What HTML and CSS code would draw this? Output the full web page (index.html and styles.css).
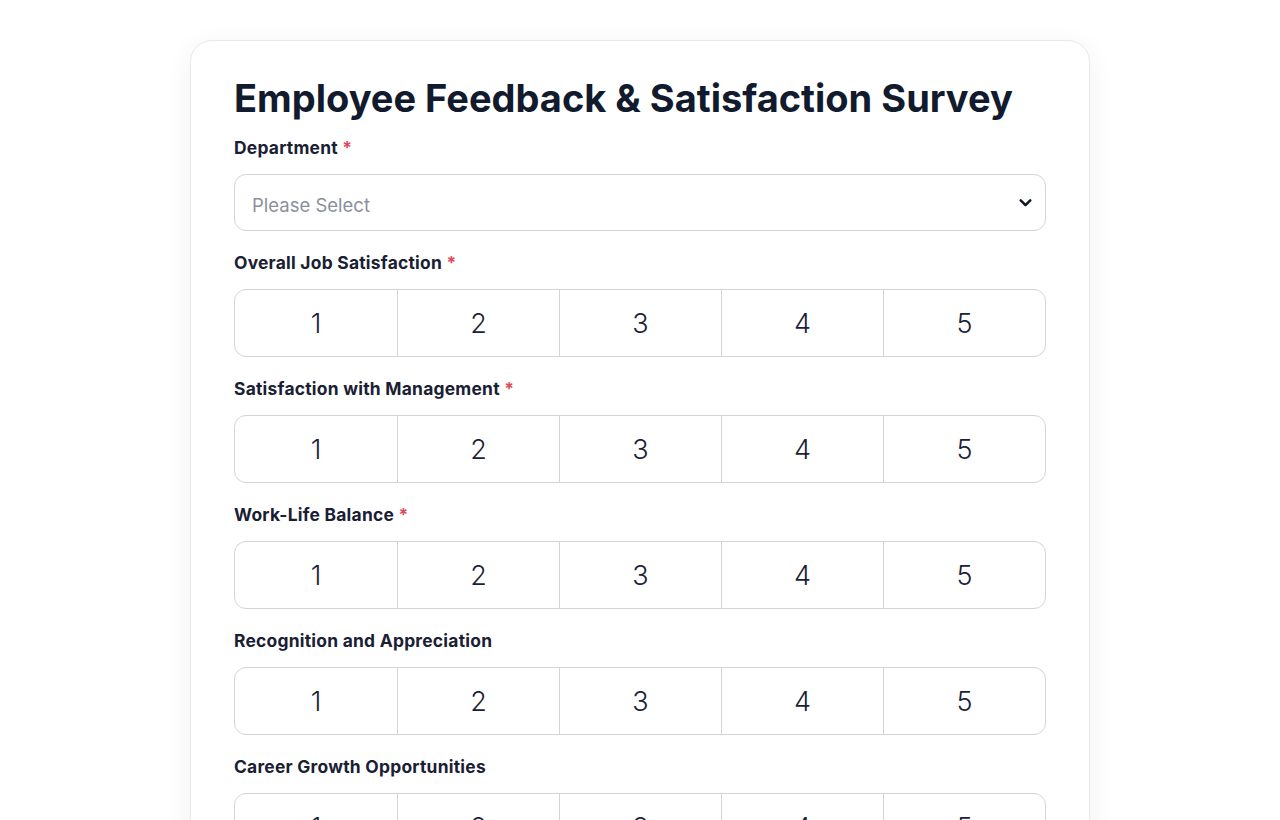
FILE: index.html
```html
<!DOCTYPE html>
<html lang="en">
<head>
<meta charset="utf-8">
<title>Employee Feedback &amp; Satisfaction Survey</title>
<link rel="stylesheet" href="styles.css">
</head>
<body>
<main class="page">
  <form class="card">
    <h1 class="title">Employee Feedback &amp; Satisfaction Survey</h1>

    <div class="field">
      <label class="label">Department <span class="req">*</span></label>
      <div class="select">
        <span class="placeholder">Please Select</span>
        <svg class="chevron" width="17" height="17" viewBox="0 0 16 16" aria-hidden="true"><path d="M3.5 6l4.5 4.5L12.5 6" fill="none" stroke="#111827" stroke-width="2.4" stroke-linecap="round" stroke-linejoin="round"/></svg>
      </div>
    </div>

    <div class="field">
      <label class="label">Overall Job Satisfaction <span class="req">*</span></label>
      <div class="rating"><span class="cell">1</span><span class="cell">2</span><span class="cell">3</span><span class="cell">4</span><span class="cell">5</span></div>
    </div>

    <div class="field">
      <label class="label">Satisfaction with Management <span class="req">*</span></label>
      <div class="rating"><span class="cell">1</span><span class="cell">2</span><span class="cell">3</span><span class="cell">4</span><span class="cell">5</span></div>
    </div>

    <div class="field">
      <label class="label">Work-Life Balance <span class="req">*</span></label>
      <div class="rating"><span class="cell">1</span><span class="cell">2</span><span class="cell">3</span><span class="cell">4</span><span class="cell">5</span></div>
    </div>

    <div class="field">
      <label class="label">Recognition and Appreciation</label>
      <div class="rating"><span class="cell">1</span><span class="cell">2</span><span class="cell">3</span><span class="cell">4</span><span class="cell">5</span></div>
    </div>

    <div class="field">
      <label class="label">Career Growth Opportunities</label>
      <div class="rating"><span class="cell">1</span><span class="cell">2</span><span class="cell">3</span><span class="cell">4</span><span class="cell">5</span></div>
    </div>
  </form>
</main>
</body>
</html>
```
FILE: styles.css
```css
* { box-sizing: border-box; }
html, body { margin: 0; padding: 0; background: #ffffff; }
body {
  font-family: Inter, "Noto Sans", "Liberation Sans", sans-serif;
  color: #141a2e;
  height: 820px;
  overflow: hidden;
}
.page {
  display: flex;
  justify-content: center;
  padding-top: 40px;
}
.card {
  width: 900px;
  background: #fff;
  border: 1px solid #e8e9ee;
  border-radius: 22px;
  box-shadow: 0 6px 28px rgba(20, 26, 46, 0.06);
  padding: 33px 43px 60px 43px;
  display: flex;
  flex-direction: column;
}
.title {
  margin: 0;
  font-size: 38px;
  line-height: 48px;
  font-weight: 700;
  letter-spacing: 0;
  color: #121a2e;
}
.field {
  display: flex;
  flex-direction: column;
  margin-top: 14px;
}
.field + .field { margin-top: 20px; }
.label {
  font-size: 17.4px;
  line-height: 24px;
  font-weight: 700;
  letter-spacing: 0.25px;
  color: #1a2033;
  margin-bottom: 14px;
}
.req { color: #e04758; }
.select {
  height: 57px;
  border: 1px solid #d2d4dc;
  border-radius: 12px;
  display: flex;
  align-items: center;
  justify-content: space-between;
  padding: 0 11px 0 17px;
}
.placeholder {
  font-size: 18.5px;
  color: #8a8f9c;
  padding-top: 4px;
}
.rating {
  height: 68px;
  border: 1px solid #d2d4dc;
  border-radius: 12px;
  display: grid;
  grid-template-columns: repeat(5, 1fr);
  overflow: hidden;
}
.cell {
  display: flex;
  align-items: center;
  justify-content: center;
  font-size: 27px;
  font-weight: 300;
  color: #1b2236;
  border-left: 1px solid #d2d4dc;
}
.cell:first-child { border-left: none; }
```
